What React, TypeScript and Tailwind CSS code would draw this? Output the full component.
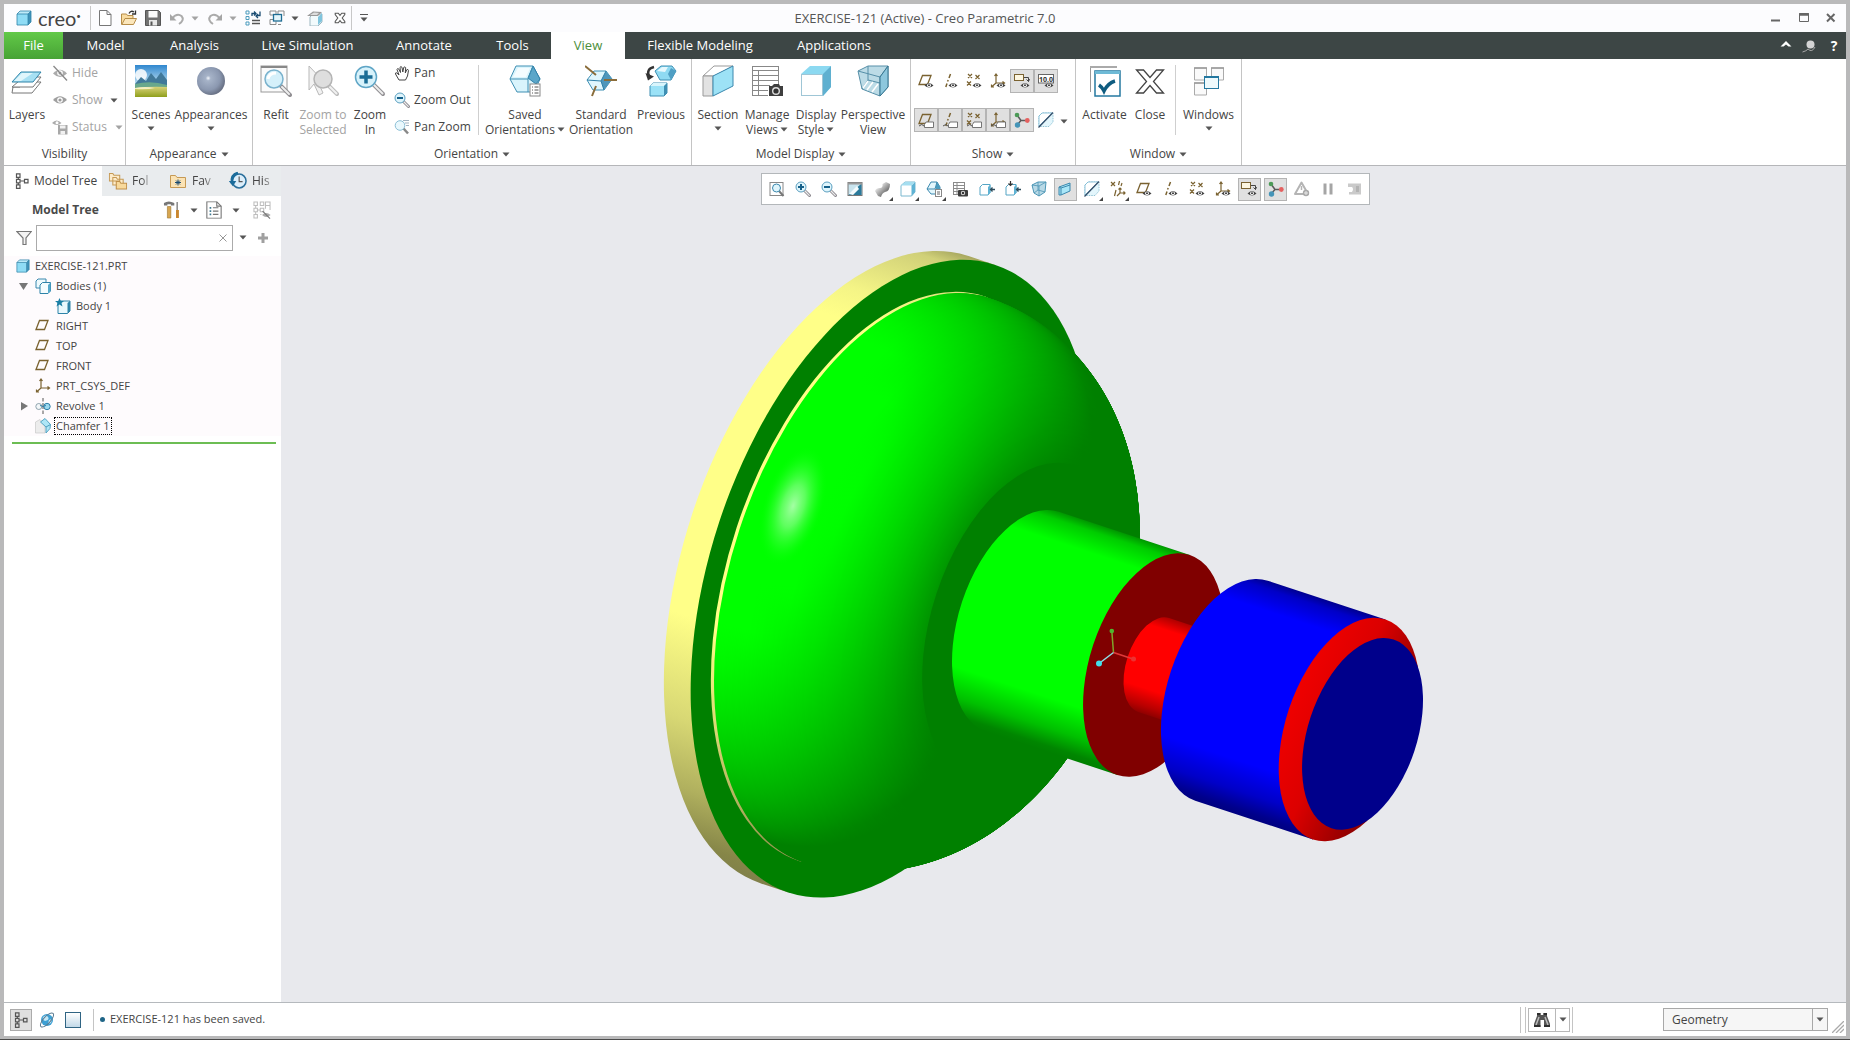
import React from "react";

type IconProps = { children: React.ReactNode; size?: 14 | 16 | 32; className?: string };

const Svg = ({ children, size = 16, className = "" }: IconProps) => (
  <svg
    width={size}
    height={size}
    viewBox={size === 32 ? "0 0 32 32" : "0 0 16 16"}
    fill="none"
    className={"shrink-0 " + className}
    aria-hidden="true"
  >
    {children}
  </svg>
);

const Caret = ({ muted = false }: { muted?: boolean }) => (
  <svg width="8" height="5" viewBox="0 0 8 5" className="inline-block shrink-0" aria-hidden="true">
    <path d="M0.5 0.5h7L4 4.5z" fill={muted ? "#a3a3a3" : "#555"} />
  </svg>
);

const BROWN = "#7a6230";

/* ---------- small icons ---------- */

const Eye = () => (
  <g>
    <path d="M6.5 12.5Q11 7.500 15.500 12.500Q11 16.500 6.500 12.500z" fill="#444" />
    <circle cx="11" cy="12.300" r="1.900" fill="#fff" />
    <circle cx="11" cy="12.300" r="1" fill="#333" />
  </g>
);

const Tag = () => (
  <g>
    <path d="M1 14q3-3 5 0" stroke="#555" />
    <path d="M8 10h7.500v5.500H6.500v-3z" fill="#fff" stroke="#666" strokeWidth="0.900" />
  </g>
);

const planeShape = <path d="M4.500 2.500h8.500l-3.500 9H1z" stroke={BROWN} strokeWidth="1.300" />;
const axisShape = <path d="M8.500 1l-1.500 4M6.200 7l-.6 1.500M5 10.500L3.800 14" stroke={BROWN} strokeWidth="1.500" />;
const pointsShape = (
  <path
    d="M2 1l4 4M6 1L2 5M9.500 2l4 4M13.500 2l-4 4M1 8.500l4 4M5 8.500l-4 4"
    stroke={BROWN}
    strokeWidth="1.200"
  />
);
const csysShape = (
  <path d="M6 10V1.500M4.500 3L6 1l1.500 2M6 10h8M12.500 8.500l2 1.500-2 1.500M6 10l-4.500 4M1.500 11.500V14H4" stroke={BROWN} strokeWidth="1.200" />
);

const Plane = () => <Svg>{planeShape}</Svg>;
const Csys = () => <Svg>{csysShape}</Svg>;
const PlaneEye = () => <Svg>{planeShape}<Eye /></Svg>;
const AxisEye = () => <Svg>{axisShape}<Eye /></Svg>;
const PointsEye = () => <Svg>{pointsShape}<Eye /></Svg>;
const CsysEye = () => <Svg>{csysShape}<Eye /></Svg>;
const PlaneTag = () => <Svg>{planeShape}<Tag /></Svg>;
const AxisTag = () => <Svg>{axisShape}<Tag /></Svg>;
const PointsTag = () => <Svg>{pointsShape}<Tag /></Svg>;
const CsysTag = () => <Svg>{csysShape}<Tag /></Svg>;

const AnnotationEye = () => (
  <Svg>
    <rect x="0.500" y="1.500" width="9" height="6" fill="#fdf6e0" stroke={BROWN} />
    <path d="M10 4.500h4.500v4M12.500 6.500l2 2 1-2.500" stroke="#444" />
    <Eye />
  </Svg>
);

const DimensionEye = () => (
  <Svg>
    <rect x="0.500" y="1.500" width="15" height="8.500" fill="#fff" stroke="#666" />
    <text x="8" y="8.500" textAnchor="middle" fontSize="7" fontWeight="bold" fill="#333">10.0</text>
    <Eye />
  </Svg>
);

const SpinCenter = () => (
  <Svg>
    <path d="M3 3l4 5.500L3 13M7 8.500h6" stroke="#5a5a5a" strokeWidth="1.500" />
    <circle cx="3" cy="3" r="2.300" fill="#4c9a57" />
    <circle cx="3.500" cy="13" r="2.700" fill="#4595b8" />
    <circle cx="13.300" cy="8.500" r="2.400" fill="#e4605f" />
  </Svg>
);

const SectionLine = () => (
  <Svg>
    <path d="M1 4l3-3h11v9l-4 4.500H1z" fill="#e3f6fc" stroke="#92c4d6" strokeDasharray="1.500 1" />
    <path d="M1 4l3-3h10L1 14z" fill="#fff" stroke="#62aecb" strokeWidth="0.700" />
    <path d="M15 0.500L0.500 15.500" stroke="#334b66" strokeWidth="1.200" />
  </Svg>
);

const Cube = ({ size = 16 }: { size?: 14 | 16 }) => (
  <Svg size={size}>
    <path d="M1 4l3-3h11l-3 3z" fill="#bdeaf8" />
    <path d="M12 4l3-3v11l-3 3z" fill="#3f92b8" />
    <rect x="1" y="4" width="11" height="11" fill="#8fdcf5" />
    <path d="M1 4l3-3h11v11l-3 3H1zM1 4h11v11M12 4l3-3" stroke="#2e83a8" strokeWidth="0.800" />
  </Svg>
);

const Wireless = () => (
  <Svg>
    <path d="M1 4.500L5 1h10v10l-3.500 4H1z" fill="#fff" stroke="#7ab8cf" />
    <path d="M11.500 4.500L15 1v10l-3.500 4z" fill="#5fb3d4" />
    <path d="M1 4.500L5 1h10l-3.500 3.500z" fill="#a5def0" />
  </Svg>
);

const Lens = ({ sign }: { sign?: "+" | "-" }) => (
  <Svg>
    <path d="M9.500 9.500l5 5" stroke="#8d8a90" strokeWidth="3" strokeLinecap="round" />
    <path d="M10 10l4.300 4.300" stroke="#eee" strokeWidth="1.200" strokeLinecap="round" />
    <circle cx="6" cy="6" r="5" fill="#dff5fc" stroke="#5b9fc0" />
    {sign && <path d={sign === "+" ? "M6 3v6M3 6h6" : "M3 6h6"} stroke="#15608a" strokeWidth="2" />}
  </Svg>
);

const RefitSmall = () => (
  <Svg>
    <rect x="1" y="1.500" width="13" height="13" fill="#fff" stroke="#888" />
    <path d="M10 10l4.500 5" stroke="#777" strokeWidth="2" />
    <circle cx="7.500" cy="7" r="4" fill="#dff5fc" stroke="#3b88ae" />
  </Svg>
);

const Repaint = () => (
  <Svg>
    <rect x="1" y="1.500" width="14" height="13" fill="#c9e4ee" stroke="#777" />
    <path d="M1.500 14L14.500 2.500V14z" fill="#2b7a9b" />
    <path d="M2 13L10 5l2 3-6 6z" fill="#f4fbfd" />
    <path d="M1 2.500h14" stroke="#999" strokeWidth="2" />
  </Svg>
);

const Shade = () => (
  <Svg>
    <defs>
      <linearGradient id="tube" x1="0" y1="0" x2="1" y2="1">
        <stop offset="0.200" stopColor="#f5f5f5" />
        <stop offset="0.800" stopColor="#5c5c5c" />
      </linearGradient>
    </defs>
    <path d="M1 10q1-3 5-3 3 0 2.500-4L12 1l4 2q0 7-5 8-3 1-4 5l-3-1z" fill="url(#tube)" />
  </Svg>
);

const SavedSmall = () => (
  <Svg>
    <path d="M1 8l4-7h6l3 5v7H5z" fill="#e3f7fd" stroke="#3b88ae" />
    <path d="M11 1l3 5v5h-4V5z" fill="#4a9cbe" />
    <path d="M1 8h8l2-7" stroke="#3b88ae" />
    <rect x="9.500" y="8.500" width="6" height="7" fill="#fff" stroke="#888" />
    <path d="M11 11h3M11 13h3" stroke="#666" />
  </Svg>
);

const ManageSmall = () => (
  <Svg>
    <path d="M1 1.500h12M1 4.500h12M1 7.500h12M1 10.500h6M1 13.500h6M1.500 1v13M5 1v13M12.500 1v8" stroke="#8b8b8b" />
    <rect x="6" y="9" width="10" height="6.500" rx="1" fill="#3d3d3d" />
    <circle cx="11" cy="12" r="2.200" fill="#ddd" />
    <circle cx="11" cy="12" r="1.200" fill="#333" />
  </Svg>
);

const Explode = ({ up = false }: { up?: boolean }) => (
  <Svg>
    <path d="M1 6l2.500-2.500H11v8L9 14H1z" fill="#fff" stroke="#55a5c5" />
    <path d="M9 6l2.500-2.500v8L9 14z" fill="#5fb3d4" />
    {up && <path d="M5.500 0v4M3.500 2.500l2 2 2-2" stroke="#333" strokeWidth="1.200" />}
    <path d="M16 8.500h-4.500M13.500 6.500l-2 2 2 2" stroke="#2d4c5c" strokeWidth="1.300" />
  </Svg>
);

const PerspectiveSmall = () => (
  <Svg>
    <path d="M1 4l6-3h8l-1 10-6 4-5-3z" fill="#b9d9e6" stroke="#4b95b5" />
    <path d="M1 4l7 1v10M8 5l7-4M7 1v8l7 2M7 9l-4 3" stroke="#4b95b5" strokeWidth="0.800" />
  </Svg>
);

const ViewPlane = () => (
  <Svg>
    <path d="M2 6l11-4v8L4 14H2z" fill="#a9e6f7" stroke="#3b88ae" />
    <path d="M2 6l2 1v7M4 7l9-3" stroke="#3b88ae" />
  </Svg>
);

const DatumFilters = () => (
  <Svg>
    <path d="M1 1l4 4M5 1L1 5M9.500 0l-1 4M12 2l-1 3M6 9l-1.500 6M10 7v5h5M10 12l-3 3M8.500 8.500L10 7l1.500 1.500M13.500 10.500L15 12l-1.500 1.500" stroke={BROWN} strokeWidth="1.200" />
  </Svg>
);

const WarnTriangle = () => (
  <Svg>
    <path d="M7.500 1.500L14 13H1z" stroke="#b4b4b4" strokeWidth="2" strokeLinejoin="round" />
    <path d="M7.500 5v4" stroke="#b4b4b4" strokeWidth="1.500" />
    <circle cx="12" cy="12" r="3.200" fill="#a9a9a9" />
    <path d="M12 10v4M10 12h4" stroke="#e8e8e8" />
  </Svg>
);

const Pause = () => <Svg><path d="M3.500 2.500h3v11h-3zM9.500 2.500h3v11h-3z" fill="#a5a5a5" /></Svg>;

const Resume = () => (
  <Svg>
    <path d="M2 2.500h13v11H3v-2.500h3q2-3 0-5H2z" fill="#cacaca" />
    <path d="M10 5h3v6h-3z" fill="#b3b3b3" />
  </Svg>
);

const TreeIcon = ({ stroke = "#555" }: { stroke?: string }) => (
  <Svg>
    <path d="M2.500 0.800H6v3.500H2.500zM2.500 6.300H6v3.500H2.500zM2.500 11.800H6v3.500H2.500zM10.500 6.300H14v3.500h-3.500zM4.300 4.300v2M4.300 9.800v2M6 8h4.500" stroke={stroke} strokeWidth="1.200" />
  </Svg>
);

const Folders = () => (
  <Svg className="scale-115">
    <path d="M0.500 8V1.500h3l1 1.500h5v5zM3.500 11.500V5h3l1 1.500h5v5z" fill="#fdeccb" stroke="#c69a55" strokeWidth="0.900" />
    <path d="M6.500 15V8.500h3l1 1.500h5v5z" fill="#f8d99b" stroke="#c0904a" strokeWidth="0.900" />
  </Svg>
);

const Favorites = () => (
  <Svg>
    <path d="M0.500 14.500v-12h5l1.500 2h8.500v10z" fill="#fbe3b4" stroke="#c69a55" />
    <path d="M8 6.500v6M5 9.500h6M6 7.500l4 4M10 7.500l-4 4" stroke="#1b4c72" />
  </Svg>
);

const History = () => (
  <Svg className="scale-115">
    <circle cx="9" cy="8" r="6" fill="#dceefa" stroke="#2a6f9b" strokeWidth="1.300" />
    <path d="M9 4v4.500h3" stroke="#555" />
    <path d="M8 1Q1.500 3 3 10" stroke="#1b6c9b" strokeWidth="2.500" />
    <path d="M0 8h6.500l-3 4.500z" fill="#1b6c9b" />
  </Svg>
);

const Tools = () => (
  <Svg className="scale-115">
    <path d="M1 2q4-3 9 0v2H7v-1H4v1H1z" fill="#777" />
    <path d="M4 5h3v10H4z" fill="#d7a650" stroke="#9b7027" strokeWidth="0.500" />
    <path d="M12.500 1v7" stroke="#888" strokeWidth="1.300" />
    <path d="M11.500 8h2.500v7h-2.500z" fill="#c9862e" />
  </Svg>
);

const SettingsPage = () => (
  <Svg className="scale-110">
    <path d="M1.500 0.500h9l4 4v11h-13z" fill="#fff" stroke="#777" />
    <path d="M10.500 0.500v4h4" stroke="#777" />
    <path d="M4 6h1.500M4 9h1.500M4 12h1.500" stroke="#3d7891" strokeWidth="1.500" />
    <path d="M7 6h5M7 9h5M7 12h5" stroke="#777" />
  </Svg>
);

const TreeHide = () => (
  <Svg className="scale-115">
    <path d="M1 1h3v3H1zM1 6.500h3v3H1zM1 12h3v3H1zM6.500 1h3v3h-3zM6.500 6.500h3v3h-3zM6.500 12h1M11 1h4v3h-4zM15 4v4M11 4v3M4 8h2.500M2.500 4v2.500M2.500 9.500V12" stroke="#bdbdbd" strokeWidth="0.900" />
    <path d="M8 12.300q3.500-3.500 7.500 0-4 3.500-7.500 0z" fill="#aaa" />
    <path d="M8.500 9l6.500 6.500" stroke="#777" />
  </Svg>
);

const Funnel = () => (
  <Svg>
    <path d="M0.800 1.500h14.400L10 8v6.500H7V8z" fill="#f3f3f3" stroke="#777" strokeWidth="1.200" />
  </Svg>
);

const Bodies = () => (
  <Svg>
    <path d="M1 3l2-2h8v9H1z" fill="#eefafd" stroke="#3b88ae" />
    <path d="M5 7l2.500-2.500H15.500V13L13 15.500H5z" fill="#f4fcfe" stroke="#2e83a8" />
    <path d="M13 7l2.500-2.500V13L13 15.500z" fill="#55a9cb" />
  </Svg>
);

const Body = () => (
  <Svg>
    <path d="M3 5l2-2h10v10l-2.500 2.500H3z" fill="#e9f8fd" stroke="#2e83a8" />
    <path d="M12.500 5L15 3v10l-2.500 2.500z" fill="#2e83a8" />
    <path d="M4.500 0l1.300 3h3.200L6.500 5l1 3.500-3-2-3 2 1-3.500L0 3h3.200z" fill="#1b7fa5" />
  </Svg>
);

const Revolve = () => (
  <Svg>
    <circle cx="3.800" cy="8.500" r="3" fill="#f3f7f9" stroke="#8fa3ad" />
    <circle cx="12" cy="8.500" r="3.200" fill="#9bd9ef" stroke="#2e7fa8" />
    <path d="M8 0v3.500M8 5v6M8 12.500V16" stroke="#555" />
    <path d="M5 7.500q3 2 6 0" stroke="#2e7fa8" />
  </Svg>
);

const Chamfer = () => (
  <Svg>
    <path d="M0.500 4L5 1.500l5 5V15H0.500z" fill="#ececec" stroke="#c9c9c9" strokeWidth="0.700" />
    <path d="M5.500 4L10 0.500l5.500 6-.5 4-4 4.500v-6z" fill="#aee6f6" stroke="#4a9dbd" strokeWidth="0.900" />
    <path d="M11 9l4.500-2.500" stroke="#4a9dbd" />
  </Svg>
);

const HideEye = () => (
  <Svg>
    <path d="M1 8.500q7-7.500 14 0-7 7-14 0z" fill="#ababab" />
    <circle cx="8" cy="8" r="2.800" fill="#fff" />
    <circle cx="8" cy="8" r="1.500" fill="#9b9b9b" />
    <path d="M1.500 1L15 15.500" stroke="#888" strokeWidth="1.300" />
  </Svg>
);

const ShowEye = () => (
  <Svg>
    <path d="M1 8q7-7.500 14 0-7 7-14 0z" fill="#9f9f9f" />
    <circle cx="8" cy="8" r="2.800" fill="#fff" />
    <circle cx="8" cy="8" r="1.600" fill="#9b9b9b" />
  </Svg>
);

const StatusIcon = () => (
  <Svg>
    <path d="M0 4q4.500-5 9.500 0-4.500 4-9.500 0z" fill="#ababab" />
    <circle cx="5" cy="3.800" r="1.500" fill="#fff" />
    <path d="M6 6h9.500v9.500H6z" fill="#a8a8a8" />
    <path d="M8 6.500h5.500v3H8zM8.500 12h4.500v3.500H8.500z" fill="#f1f1f1" />
  </Svg>
);

const Hand = () => (
  <Svg>
    <path d="M5 15L1.500 9q-.3-1.500 1.200-1.200L5 10 3 4.500q.3-1.500 1.700-.6L6.500 7.500 6 2.300q.8-1.400 2 0l.8 4.700 1-4.700q1.200-1 1.900.3L11.300 8l1.500-3.300q1.500-.7 1.700.7L13.500 11 11.500 15z" fill="#fff" stroke="#444" />
  </Svg>
);

const PanZoom = () => (
  <Svg>
    <path d="M9.500 9.500l4.500 5" stroke="#888" strokeWidth="2.500" />
    <circle cx="6" cy="6.500" r="4.800" fill="#e9f8fd" stroke="#8bbfd6" />
    <path d="M9 1.500h6M11 4h4M12 6.500h3" stroke="#9ab" strokeWidth="0.900" />
  </Svg>
);

/* ---------- title bar icons ---------- */

const NewFile = () => <Svg><path d="M2.500 0.500h7.500l4 4v11H2.500zM10 0.500v4h4" fill="#fff" stroke="#777" /></Svg>;

const OpenFile = () => (
  <Svg>
    <path d="M0.500 14.500V4h5l1 1.500H12v3" fill="#f8dba0" stroke="#b68d49" />
    <path d="M0.800 14.500L4 8.500h11.500l-3 6z" fill="#fbe6bb" stroke="#b68d49" />
    <path d="M8 3.500q2-3.500 5-1.500M11 4h3.500V0.500" stroke="#333" strokeWidth="1.300" />
  </Svg>
);

const Save = () => (
  <Svg>
    <path d="M0.500 0.500h13l2 2v13h-15z" fill="#727272" stroke="#555" />
    <path d="M3.500 1h9v6.500h-9z" fill="#fafafa" />
    <path d="M4 10h8v5.500H4z" fill="#e7e7e7" />
    <path d="M5.500 11.500h2v4h-2z" fill="#555" />
  </Svg>
);

const Undo = ({ flip = false }: { flip?: boolean }) => (
  <Svg>
    <g transform={flip ? "matrix(-1 0 0 1 16 0)" : undefined}>
      <path d="M3 8.500q5-6 9.500-2.500 3.500 4-2.500 8" stroke="#ababab" strokeWidth="2" />
      <path d="M1 4v6.500h6.500z" fill="#a6a6a6" />
    </g>
  </Svg>
);

const Regenerate = () => (
  <Svg>
    <path d="M1 1h3v3H1zM1 6.500h3v3H1zM1 12h3v3H1z" stroke="#4b9bbd" />
    <path d="M7 10.500h8M7 13.500h8" stroke="#555" strokeWidth="1.300" />
    <path d="M7 6V3.500h4M9 1.500l2 2-2 2M15 1.500V5.500h-3M13 4l-2 2 2 2" stroke="#1b4c72" strokeWidth="1.300" />
  </Svg>
);

const WindowsSmall = () => (
  <Svg>
    <path d="M5 5H1V1h6v3M9 4V1h6v5M4 9.500H1v5h6v-3M9 14.500h3" stroke="#8a8a8a" />
    <rect x="4.500" y="4.500" width="8" height="6.500" fill="#e4f5fb" stroke="#1f6d94" strokeWidth="1.300" />
  </Svg>
);

const SectionSmall = () => (
  <Svg>
    <path d="M3 7l3-3h9v8l-4 4H3z" fill="#f2fafc" stroke="#9fb8c2" />
    <path d="M11 7l4-4v8l-4 4z" fill="#7fc4dd" />
    <path d="M0 6l6-4.500L15 2l-4 4z" fill="#999" />
    <path d="M3 5l4-2.500 5 .5-2 2z" fill="#ddd" />
  </Svg>
);

const CloseX = () => (
  <Svg size={14}>
    <path d="M2.500 2.500h3.500L8 5l2-2.500h3.500v1.500L10.500 8l3 4v1.500H10L8 11l-2 2.500H2.500V12l3-4-3-4z" fill="#fff" stroke="#555" strokeWidth="1.200" />
  </Svg>
);

/* ---------- large ribbon icons ---------- */

const LayersIcon = () => (
  <Svg size={32}>
    <path d="M9 22H2l-1 6h20l9-11h-4" fill="#fff" stroke="#777" />
    <path d="M8 16L1 22h21l8-10h-4" fill="#fff" stroke="#777" />
    <path d="M10 7h20L22 17H1z" fill="#a7e0f3" stroke="#2e83a8" />
    <path d="M11 8h11L10 16H3z" fill="#e0f6fc" />
  </Svg>
);

const ScenesIcon = () => (
  <Svg size={32}>
    <defs>
      <linearGradient id="sky" x1="0" y1="0" x2="0" y2="1">
        <stop offset="0" stopColor="#2f87cf" />
        <stop offset="0.600" stopColor="#bfe0f0" />
      </linearGradient>
      <linearGradient id="field" x1="0" y1="0" x2="0" y2="1">
        <stop offset="0" stopColor="#d9d37a" />
        <stop offset="1" stopColor="#8f9f1c" />
      </linearGradient>
    </defs>
    <rect width="32" height="32" fill="url(#sky)" />
    <circle cx="6" cy="10" r="6" fill="#fff" opacity="0.850" />
    <path d="M0 19l6-7 5 4 5-8 5 6 5-7 6 8v7H0z" fill="#41799a" />
    <path d="M0 19q16-4 32 1v3H0z" fill="#69a88c" />
    <path d="M0 23q16-2 32-1v10H0z" fill="url(#field)" />
    <path d="M0 23q10-2 20 0-8 2-20 1z" fill="#f4efc0" />
  </Svg>
);

const AppearanceIcon = () => (
  <Svg size={32}>
    <defs>
      <radialGradient id="ball" cx="0.400" cy="0.400" r="0.600">
        <stop offset="0" stopColor="#f3f6fb" />
        <stop offset="0.150" stopColor="#a6b3c8" />
        <stop offset="0.700" stopColor="#8b98b0" />
        <stop offset="1" stopColor="#6b7488" />
      </radialGradient>
    </defs>
    <circle cx="16" cy="16" r="14" fill="url(#ball)" />
  </Svg>
);

const RefitIcon = () => (
  <Svg size={32}>
    <rect x="1" y="1" width="26" height="26" fill="#fbfbfb" stroke="#999" />
    <path d="M1 2h26" stroke="#888" strokeWidth="2" />
    <path d="M21 21l9 9" stroke="#918f93" strokeWidth="4" strokeLinecap="round" />
    <path d="M22 22l7 7" stroke="#eee" strokeWidth="2" strokeLinecap="round" />
    <circle cx="14" cy="14" r="9" fill="#d5f0fa" stroke="#7ab2cd" strokeWidth="1.500" />
    <path d="M8 14q1-6 8-6" stroke="#fff" strokeWidth="3" />
  </Svg>
);

const ZoomSelectedIcon = () => (
  <Svg size={32}>
    <path d="M2 1v24l5-6 5 11 4-2-4-9h7z" fill="#f2f2f2" stroke="#b9b9b9" />
    <path d="M22 21l8 8" stroke="#bcbcbc" strokeWidth="4" strokeLinecap="round" />
    <path d="M23 22l6.500 6.500" stroke="#f1f1f1" strokeWidth="2" strokeLinecap="round" />
    <circle cx="16" cy="14" r="9" fill="#dedede" stroke="#b4b4b4" strokeWidth="1.500" />
  </Svg>
);

const ZoomInIcon = () => (
  <Svg size={32}>
    <path d="M19 19l10 10" stroke="#918f93" strokeWidth="4" strokeLinecap="round" />
    <path d="M20 20l8.500 8.500" stroke="#eee" strokeWidth="2" strokeLinecap="round" />
    <circle cx="12" cy="12" r="10.500" fill="#d7f2fb" stroke="#5ea5c6" strokeWidth="1.500" />
    <path d="M12 5.500v13M5.500 12h13" stroke="#1a6d96" strokeWidth="3.500" />
  </Svg>
);

const SavedIcon = () => (
  <Svg size={32}>
    <path d="M1 14L7 1h17l7 13-6 13H8z" fill="#d9f4fc" stroke="#3f8fb3" />
    <path d="M24 1l7 13-4 5-8-6z" fill="#5ba6c9" stroke="#2e7fa8" />
    <path d="M1 14h18L24 1M19 14v13" stroke="#3f8fb3" />
    <path d="M9 3h12l-4 9H4z" fill="#f4fcff" />
    <rect x="21" y="19" width="10" height="12" fill="#fff" stroke="#888" />
    <path d="M23 22h1M25.500 22h4M23 25h1M25.500 25h4M23 28h1M25.500 28h4" stroke="#555" />
  </Svg>
);

const StandardIcon = () => (
  <Svg size={32}>
    <path d="M2 15l7-9h12l6 8-8 11H8z" fill="#dff6fd" stroke="#3f8fb3" />
    <path d="M21 6l6 8-8 11-3-9z" fill="#4f96bb" />
    <path d="M2 15l14 1 5-10M16 16l3 9" stroke="#2e7fa8" />
    <path d="M0 1l11 9M19 15h13M11 21L7 31" stroke="#8a6d3b" strokeWidth="2" />
  </Svg>
);

const PreviousIcon = () => (
  <Svg size={32}>
    <path d="M10 6l6-5h11l4 5-5 9H15z" fill="#8fdaf2" stroke="#3f8fb3" />
    <path d="M12 6l5-4h6l-3 5z" fill="#e5f8fd" />
    <path d="M26 3l5 3-5 9-3-6z" fill="#4f9fc4" />
    <path d="M5 21l3-3h14v10l-3 3H5z" fill="#9be2f7" stroke="#3f8fb3" />
    <path d="M5 21l3-3h14l-3 3z" fill="#d9f5fc" />
    <path d="M19 21l3-3v10l-3 3z" fill="#3f8fb3" />
    <path d="M9 2Q1 4 4 11" stroke="#333" strokeWidth="2.500" />
    <path d="M0.500 8L3 15.500l6-4z" fill="#333" />
  </Svg>
);

const SectionIcon = () => (
  <Svg size={32}>
    <path d="M1 11L12 1h19L12 11z" fill="#fff" stroke="#999" />
    <path d="M1 11h10v20H1z" fill="#e2e2e2" stroke="#999" />
    <path d="M11 11L31 1v20L11 31z" fill="#9de2f6" stroke="#3b88ae" />
  </Svg>
);

const ManageIcon = () => (
  <Svg size={32}>
    <path d="M1 1h27v29H1z" fill="#fff" />
    <path d="M1 1.500h27M1 5.500h27M1 10.500h27M1 15.500h27M1 20.500h18M1 25.500h16M1 30.500h16M1.500 1v30M7.500 6v25M27.500 1v20" stroke="#888" />
    <path d="M18 21h3l2-2h5l1 2h3v10H18z" fill="#3e3e3e" />
    <circle cx="25" cy="26" r="4" fill="#ddd" />
    <circle cx="25" cy="26" r="2.600" fill="#333" />
  </Svg>
);

const DisplayIcon = () => (
  <Svg size={32}>
    <path d="M1 9l9-8h21v21l-8 9H1z" fill="#8cd9f1" />
    <path d="M23 9l8-8v21l-8 9z" fill="#5fb0d0" />
    <rect x="1.500" y="9.500" width="21" height="21" fill="#fff" stroke="#9fc6d6" />
  </Svg>
);

const PerspectiveIcon = () => (
  <Svg size={32}>
    <path d="M1 6L11 1h20v21l-8 9-18-7z" fill="#bcdbe6" stroke="#568fa8" />
    <path d="M1 6l22 6v19M23 12l8-11M11 1v14l20 5M11 15L5 24" stroke="#568fa8" />
    <path d="M23 12l8-11v21l-8 9z" fill="#8dc7dd" stroke="#36758f" />
    <path d="M11 16L6 23M16 17l-6 8M21 19l-6 8" stroke="#fff" strokeWidth="1.500" />
  </Svg>
);

const ActivateIcon = () => (
  <Svg size={32}>
    <path d="M1.500 27V1.500h26" stroke="#999" />
    <path d="M1 2h27" stroke="#aaa" strokeWidth="2" />
    <rect x="6" y="6" width="25" height="25" fill="#fff" stroke="#2478a0" strokeWidth="1.500" />
    <path d="M6 7.500h25" stroke="#6ebad6" strokeWidth="3" />
    <path d="M10 20q3 2 5 6 4-8 11-10" stroke="#0f5c80" strokeWidth="3.500" />
  </Svg>
);

const CloseIcon = () => (
  <Svg size={32}>
    <path d="M2.500 5h7L16 12.500 22.500 5h7L19.500 16.500 29.500 28h-7L16 20.500 9.500 28h-7l10-11.500z" fill="#fff" stroke="#444" strokeWidth="1.300" />
  </Svg>
);

const WindowsIcon = () => (
  <Svg size={32}>
    <path d="M1.500 3h12v12h-12zM18.500 3h12v12h-12zM1.500 18h12v12h-12z" fill="#fafafa" stroke="#aaa" />
    <path d="M1 3h13M18 3h13M1 18h13" stroke="#999" strokeWidth="1.500" />
    <rect x="11.500" y="11.500" width="14" height="12" fill="#eefafd" stroke="#2478a0" />
    <path d="M11 12h15" stroke="#2478a0" strokeWidth="2" />
  </Svg>
);

/* ---------- ribbon building blocks ---------- */

type BigButtonProps = { icon: React.ReactNode; lines: string[]; width: string; caret?: "below" | "inline"; muted?: boolean };

const BigButton = ({ icon, lines, width, caret, muted }: BigButtonProps) => (
  <button className={`flex shrink-0 flex-col items-center ${width} ${muted ? "text-[#a3a3a3]" : ""}`}>
    {icon}
    <span className="mt-2.5 flex flex-col items-center text-xs leading-[15px] whitespace-nowrap">
      {lines.map((line, i) => (
        <span key={line} className="flex items-center gap-0.5">
          {line}
          {caret === "inline" && i === lines.length - 1 && <Caret />}
        </span>
      ))}
    </span>
    {caret === "below" && <span className="flex h-3 items-center"><Caret /></span>}
  </button>
);

const SmallButton = ({ icon, label, caret, muted }: { icon: React.ReactNode; label: string; caret?: boolean; muted?: boolean }) => (
  <button className={`flex h-4 items-center gap-1 text-xs whitespace-nowrap ${muted ? "text-[#a3a3a3]" : ""}`}>
    {icon}
    <span>{label}</span>
    {caret && <span className="ml-1 flex"><Caret muted={label === "Status"} /></span>}
  </button>
);

const Group = ({ label, width, caret = true, children }: { label: string; width: string; caret?: boolean; children: React.ReactNode }) => (
  <section className={`flex shrink-0 flex-col border-r border-[#c4c4c4] ${width}`} aria-label={label}>
    <div className="flex h-[85px] pt-1.5">{children}</div>
    <div className="flex h-5 items-center justify-center gap-1 text-xs">
      {label}
      {caret && <Caret />}
    </div>
  </section>
);

const IconButton = ({ label, pressed, children }: { label: string; pressed?: boolean; children: React.ReactNode }) => (
  <button
    aria-label={label}
    aria-pressed={pressed}
    className={`flex size-6 shrink-0 items-center justify-center ${pressed ? "border border-[#b4b4b4] bg-[#e0e0e0]" : ""}`}
  >
    {children}
  </button>
);

const tabs = [
  { name: "Model", width: "w-[85px]" },
  { name: "Analysis", width: "w-[93px]" },
  { name: "Live Simulation", width: "w-[133px]" },
  { name: "Annotate", width: "w-[100px]" },
  { name: "Tools", width: "w-[77px]" },
  { name: "View", width: "w-[74px]" },
  { name: "Flexible Modeling", width: "w-[150px]" },
  { name: "Applications", width: "w-[118px]" },
];

const TitleBar = () => (
  <header className="relative flex h-7 shrink-0 items-center bg-[#fcfcfe] pr-1.5 pl-3">
    <Cube />
    <span className="ml-1.5 flex w-12 items-start font-[Lato] text-xl leading-5 text-[#444]">
      creo<span className="mt-1 text-[8px] leading-none">•</span>
    </span>
    <span className="ml-1 h-6 w-px bg-[#c8c8c8]" />
    <div className="ml-1.5 flex items-center gap-2">
      <button aria-label="New"><NewFile /></button>
      <button aria-label="Open"><OpenFile /></button>
      <button aria-label="Save"><Save /></button>
      <button aria-label="Undo" className="flex items-center gap-1.5"><Undo /><Caret muted /></button>
      <button aria-label="Redo" className="flex items-center gap-1.5"><Undo flip /><Caret muted /></button>
      <button aria-label="Regenerate"><Regenerate /></button>
      <button aria-label="Switch windows" className="flex items-center gap-1.5"><WindowsSmall /><Caret /></button>
      <button aria-label="Section view"><SectionSmall /></button>
      <button aria-label="Close window" className="ml-0.5"><CloseX /></button>
    </div>
    <span className="ml-1 h-6 w-px bg-[#c8c8c8]" />
    <button aria-label="Customize toolbar" className="ml-2 flex flex-col items-center gap-0.5">
      <span className="h-px w-2 bg-[#555]" />
      <Caret />
    </button>
    <h1 className="pointer-events-none absolute inset-x-0 pt-px text-center text-[13px] text-[#555]">
      EXERCISE-121 (Active) - Creo Parametric 7.0
    </h1>
    <div className="ml-auto flex items-center gap-3">
      <button aria-label="Minimize"><Svg><path d="M3 10.500h9" stroke="#666" strokeWidth="2" /></Svg></button>
      <button aria-label="Maximize"><Svg><path d="M3.500 3.500h9v8h-9z" stroke="#666" /><path d="M3 4.500h10" stroke="#666" strokeWidth="2.500" /></Svg></button>
      <button aria-label="Close"><Svg><path d="M3 4l7.500 7.500M10.500 4L3 11.500" stroke="#666" strokeWidth="2" /></Svg></button>
    </div>
  </header>
);

const TabBar = () => (
  <nav className="flex h-[27px] shrink-0 items-stretch bg-[#3d4645] text-[13px] text-white">
    <button className="w-[59px] bg-linear-to-b from-[#62c948] to-[#47a335] pt-px">File</button>
    {tabs.map((tab) => (
      <button key={tab.name} className={`pt-px ${tab.width} ${tab.name === "View" ? "bg-white text-[#4c8f3b]" : ""}`}>
        {tab.name}
      </button>
    ))}
    <div className="ml-auto flex items-center gap-2 pr-1">
      <button aria-label="Collapse ribbon"><Svg><path d="M2.500 8.500L8 3l5.500 5.500h-3L8 6.500l-2.500 2z" fill="#fff" /></Svg></button>
      <button aria-label="Search"><Svg><path d="M0.500 14q4-1 5.500-3 4 4 7-2" stroke="#aaa" /><circle cx="8.500" cy="6.500" r="4" fill="#d4d4d4" /></Svg></button>
      <button aria-label="Help" className="w-4 text-[14px] font-bold">?</button>
    </div>
  </nav>
);

const Ribbon = () => (
  <div className="flex h-[107px] shrink-0 border-b border-[#b5b6b9] bg-white">
    <Group label="Visibility" width="w-[122px]" caret={false}>
      <BigButton icon={<LayersIcon />} lines={["Layers"]} width="w-[46px]" />
      <div className="flex flex-col gap-[11px] pl-0.5">
        <SmallButton icon={<HideEye />} label="Hide" muted />
        <SmallButton icon={<ShowEye />} label="Show" caret muted />
        <SmallButton icon={<StatusIcon />} label="Status" caret muted />
      </div>
    </Group>
    <Group label="Appearance" width="w-[127px]">
      <BigButton icon={<ScenesIcon />} lines={["Scenes"]} width="w-[50px]" caret="below" />
      <BigButton icon={<AppearanceIcon />} lines={["Appearances"]} width="w-[70px]" caret="below" />
    </Group>
    <Group label="Orientation" width="w-[439px]">
      <BigButton icon={<RefitIcon />} lines={["Refit"]} width="w-[46px]" />
      <BigButton icon={<ZoomSelectedIcon />} lines={["Zoom to", "Selected"]} width="w-[48px]" muted />
      <BigButton icon={<ZoomInIcon />} lines={["Zoom", "In"]} width="w-[46px]" />
      <div className="flex w-[85px] flex-col gap-[11px] pl-px">
        <SmallButton icon={<Hand />} label="Pan" />
        <SmallButton icon={<Lens sign="-" />} label="Zoom Out" />
        <SmallButton icon={<PanZoom />} label="Pan Zoom" />
      </div>
      <span className="h-[70px] w-px bg-[#cfcfcf]" />
      <BigButton icon={<SavedIcon />} lines={["Saved", "Orientations"]} width="w-[92px]" caret="inline" />
      <BigButton icon={<StandardIcon />} lines={["Standard", "Orientation"]} width="w-[60px]" />
      <BigButton icon={<PreviousIcon />} lines={["Previous"]} width="w-[60px]" />
    </Group>
    <Group label="Model Display" width="w-[219px]">
      <BigButton icon={<SectionIcon />} lines={["Section"]} width="w-[52px]" caret="below" />
      <BigButton icon={<ManageIcon />} lines={["Manage", "Views"]} width="w-[46px]" caret="inline" />
      <BigButton icon={<DisplayIcon />} lines={["Display", "Style"]} width="w-[52px]" caret="inline" />
      <BigButton icon={<PerspectiveIcon />} lines={["Perspective", "View"]} width="w-[62px]" />
    </Group>
    <Group label="Show" width="w-[165px]">
      <div className="flex flex-col gap-[15px] pt-1 pl-[3px]">
        <div className="flex">
          <IconButton label="Plane display"><PlaneEye /></IconButton>
          <IconButton label="Axis display"><AxisEye /></IconButton>
          <IconButton label="Point display"><PointsEye /></IconButton>
          <IconButton label="Csys display"><CsysEye /></IconButton>
          <IconButton label="Annotation display" pressed><AnnotationEye /></IconButton>
          <IconButton label="Dimension display" pressed><DimensionEye /></IconButton>
        </div>
        <div className="flex items-center">
          <IconButton label="Plane tags" pressed><PlaneTag /></IconButton>
          <IconButton label="Axis tags" pressed><AxisTag /></IconButton>
          <IconButton label="Point tags" pressed><PointsTag /></IconButton>
          <IconButton label="Csys tags" pressed><CsysTag /></IconButton>
          <IconButton label="Spin center" pressed><SpinCenter /></IconButton>
          <IconButton label="Section display"><SectionLine /></IconButton>
          <button aria-label="More section options" className="px-0.5"><Caret /></button>
        </div>
      </div>
    </Group>
    <Group label="Window" width="w-[166px]">
      <BigButton icon={<ActivateIcon />} lines={["Activate"]} width="w-[57px]" />
      <BigButton icon={<CloseIcon />} lines={["Close"]} width="w-[34px]" />
      <span className="ml-2 h-[70px] w-px bg-[#cfcfcf]" />
      <BigButton icon={<WindowsIcon />} lines={["Windows"]} width="w-[65px]" caret="below" />
    </Group>
  </div>
);

/* ---------- model tree ---------- */

const treeItems = [
  { name: "EXERCISE-121.PRT", icon: <Cube size={14} />, indent: "pl-3" },
  { name: "Bodies (1)", icon: <Bodies />, indent: "pl-2.5", toggle: "open" },
  { name: "Body 1", icon: <Body />, indent: "pl-[51px]" },
  { name: "RIGHT", icon: <Plane />, indent: "pl-[31px]" },
  { name: "TOP", icon: <Plane />, indent: "pl-[31px]" },
  { name: "FRONT", icon: <Plane />, indent: "pl-[31px]" },
  { name: "PRT_CSYS_DEF", icon: <Csys />, indent: "pl-[31px]" },
  { name: "Revolve 1", icon: <Revolve />, indent: "pl-2.5", toggle: "closed" },
  { name: "Chamfer 1", icon: <Chamfer />, indent: "pl-[31px]", focused: true },
];

const sideTabs = [
  { name: "Fol", icon: <Folders />, width: "w-[60px]" },
  { name: "Fav", icon: <Favorites />, width: "w-[60px]" },
  { name: "His", icon: <History />, width: "w-[56px]" },
];

const ModelTree = () => (
  <aside className="flex w-[277px] shrink-0 flex-col bg-white">
    <div className="flex h-[30px] shrink-0 bg-[#e9ecee] text-xs">
      <button className="flex w-[98px] shrink-0 items-center gap-1 bg-white pl-2.5 whitespace-nowrap">
        <TreeIcon />
        Model Tree
      </button>
      {sideTabs.map((tab) => (
        <button key={tab.name} className={`flex items-center gap-1.5 pl-2 ${tab.width}`}>
          {tab.icon}
          <span className="[mask-image:linear-gradient(to_right,black_60%,rgba(0,0,0,0.4))]">{tab.name}</span>
        </button>
      ))}
    </div>
    <div className="flex h-7 items-center pl-7">
      <h2 className="w-[132px] text-xs font-bold text-[#4a4a4a]">Model Tree</h2>
      <div className="flex items-center gap-2">
        <button aria-label="Tree tools" className="flex items-center gap-2.5"><Tools /><Caret /></button>
        <button aria-label="Tree settings" className="flex items-center gap-2.5"><SettingsPage /><Caret /></button>
        <button aria-label="Show tree columns" className="ml-1.5"><TreeHide /></button>
      </div>
    </div>
    <div className="flex h-[27px] items-center gap-1 pl-3">
      <Funnel />
      <div className="flex h-[26px] w-[197px] items-center border border-[#ababab] bg-white pr-0.5">
        <input aria-label="Filter tree" type="text" className="min-w-0 flex-1 px-1 text-xs outline-none" />
        <button aria-label="Clear filter"><Svg size={14}><path d="M4 4l8 8M12 4l-8 8" stroke="#888" /></Svg></button>
      </div>
      <button aria-label="Filter options" className="ml-0.5 flex w-3"><Caret /></button>
      <button aria-label="Add filter"><Svg><path d="M8 3v10M3 8h10" stroke="#a0a0a0" strokeWidth="3" /></Svg></button>
    </div>
    <ul className="mt-[5px] bg-[#fefbfd] text-[11px]">
      {treeItems.map((item) => (
        <li key={item.name} className={`flex h-5 items-center ${item.indent}`}>
          {item.toggle && (
            <button aria-label={`Toggle ${item.name}`} className="mr-[5px]">
              <Svg>
                <path d={item.toggle === "open" ? "M5 5h9l-4.500 7z" : "M7 4l7 4-7 4.500z"} fill="#777" />
              </Svg>
            </button>
          )}
          {item.icon}
          <span className={`ml-[3px] border border-dotted px-px leading-4 ${item.focused ? "border-black" : "border-transparent"}`}>
            {item.name}
          </span>
        </li>
      ))}
    </ul>
    <div className="mt-1.5 mr-[5px] ml-2 h-0.5 bg-[#6cbd53]" />
  </aside>
);

/* ---------- 3D view ---------- */

// circles perpendicular to the shaft project to ellipses with this width/height ratio
const RATIO = 0.55;
const AXIAL = 0.835;

const Disc = ({ at, r, fill }: { at: number; r: number; fill: string }) => (
  <ellipse cx={at} cy={0} rx={r * RATIO} ry={r} fill={fill} />
);

const Barrel = ({ from, to, r, fill }: { from: number; to: number; r: number; fill: string }) => (
  <path d={`M${to} ${-r}H${from}A${r * RATIO} ${r} 0 0 0 ${from} ${r}H${to}z`} fill={fill} />
);

const Shading = ({ id, r, stops }: { id: string; r: number; stops: [number, string][] }) => (
  <linearGradient id={id} gradientUnits="userSpaceOnUse" x1="0" y1={-r} x2="0" y2={r}>
    {stops.map(([s, color]) => (
      <stop key={s} offset={(s + 1) / 2} stopColor={color} />
    ))}
  </linearGradient>
);

const BOWL_START = -272.4;
const BOWL_STEPS = 120;
const LIGHT = (-14 * Math.PI) / 180;

const bowlRings = Array.from({ length: BOWL_STEPS + 1 }, (_, i) => {
  const phi = ((79 * i) / BOWL_STEPS) * (Math.PI / 180);
  const r = 133.2 + 163.8 * Math.cos(phi);
  const at = BOWL_START + 163.8 * Math.sin(phi) * AXIAL;
  const stops = Array.from({ length: 25 }, (_, k) => {
    const c = 1 - k / 12;
    const dot = Math.cos(phi) * c - 0.05 * Math.sin(phi);
    const level = Math.round(Math.min(255, 128 + Math.max(0, dot) * 158));
    return { offset: k / 24, color: `rgb(0,${level},0)` };
  });
  return { id: `bowl${i}`, r, at, stops };
});

const PartView = () => (
  <svg viewBox="281 166 1565 836" className="size-full" role="img" aria-label="EXERCISE-121 shaded model">
    <defs>
      <Shading id="yellow" r={330.4} stops={[[-1, "#a8a860"], [-0.96, "#d0d078"], [-0.8, "#f4f486"], [-0.7, "#ffff88"], [0.3, "#ffff88"], [0.6, "#d8d874"], [0.8, "#b0b05e"], [0.95, "#868648"], [1, "#80804a"]]} />
      <Shading id="green" r={115.8} stops={[[-1, "#009800"], [-0.93, "#00cc00"], [-0.75, "#00ff00"], [0.55, "#00ff00"], [0.8, "#00c000"], [0.95, "#008600"], [1, "#008000"]]} />
      <Shading id="blue" r={115.8} stops={[[-1, "#000090"], [-0.93, "#0000c8"], [-0.75, "#0000ff"], [0.55, "#0000ff"], [0.8, "#0000c8"], [0.95, "#00008c"], [1, "#000080"]]} />
      <Shading id="red" r={49.4} stops={[[-1, "#b00000"], [-0.75, "#ff0000"], [0.5, "#ff0000"], [0.85, "#b80000"], [1, "#900000"]]} />
      <linearGradient id="chamfer" x1="0" y1="0.350" x2="1" y2="0.550">
        <stop offset="0" stopColor="#f00000" />
        <stop offset="0.400" stopColor="#dc0000" />
        <stop offset="0.750" stopColor="#a00000" />
        <stop offset="1" stopColor="#800000" />
      </linearGradient>
      <radialGradient id="shine">
        <stop offset="0" stopColor="#a4ffa4" />
        <stop offset="0.350" stopColor="#7dff7d" stopOpacity="0.750" />
        <stop offset="0.700" stopColor="#40ff40" stopOpacity="0.350" />
        <stop offset="1" stopColor="#00ff00" stopOpacity="0" />
      </radialGradient>
      {bowlRings.map((ring) => (
        <linearGradient
          key={ring.id}
          id={ring.id}
          gradientUnits="userSpaceOnUse"
          gradientTransform={`translate(${ring.at} 0) scale(${RATIO} 1)`}
          x1={-ring.r * Math.cos(LIGHT)}
          y1={ring.r * Math.sin(LIGHT)}
          x2={ring.r * Math.cos(LIGHT)}
          y2={-ring.r * Math.sin(LIGHT)}
        >
          {ring.stops.map((s) => (
            <stop key={s.offset} offset={s.offset} stopColor={s.color} />
          ))}
        </linearGradient>
      ))}
    </defs>
    <g transform="translate(1153.6 665) rotate(18.25)">
      <Barrel from={-303.8} to={-275.6} r={330.4} fill="url(#yellow)" />
      <Disc at={-275.6} r={330.4} fill="#008000" />
      <Barrel from={-275.6} to={-272.4} r={297.2} fill="url(#yellow)" />
      {bowlRings.map((ring) => (
        <Disc key={ring.id} at={ring.at} r={ring.r} fill={`url(#${ring.id})`} />
      ))}
      <Disc at={-138} r={164.8} fill="#008000" />
      <Barrel from={-138} to={0} r={115.8} fill="url(#green)" />
      <Disc at={0} r={115.8} fill="#800000" />
      <Barrel from={0} to={84} r={49.4} fill="url(#red)" />
      <Barrel from={82} to={206} r={115.8} fill="url(#blue)" />
      <Disc at={206} r={115.8} fill="url(#chamfer)" />
      <Disc at={220} r={99.3} fill="#00008b" />
    </g>
    <ellipse cx="793" cy="506" rx="30" ry="62" fill="url(#shine)" transform="rotate(18 793 506)" />
    <g strokeWidth="1.500" fill="none">
      <path d="M1113.500 652.500L1111.800 631" stroke="#7fa32a" />
      <path d="M1113.500 652.500l19.500 6.500" stroke="#e03a3a" />
      <path d="M1113.500 652.500L1099 663.500" stroke="#8fdfe6" />
      <circle cx="1111.800" cy="631" r="2.300" fill="#4fb52f" />
      <circle cx="1133.500" cy="659" r="2.500" fill="#ee3030" />
      <circle cx="1099" cy="663.500" r="3" fill="#42e0ea" />
    </g>
  </svg>
);

const viewTools: { label: string; icon: React.ReactNode; pressed?: boolean; more?: boolean }[] = [
  { label: "Refit", icon: <RefitSmall /> },
  { label: "Zoom in", icon: <Lens sign="+" /> },
  { label: "Zoom out", icon: <Lens sign="-" /> },
  { label: "Repaint", icon: <Repaint /> },
  { label: "Rendering options", icon: <Shade />, more: true },
  { label: "Display style", icon: <Wireless />, more: true },
  { label: "Saved orientations", icon: <SavedSmall />, more: true },
  { label: "View manager", icon: <ManageSmall /> },
  { label: "View normal", icon: <Explode /> },
  { label: "View planar", icon: <Explode up /> },
  { label: "Perspective view", icon: <PerspectiveSmall /> },
  { label: "Section view", icon: <ViewPlane />, pressed: true },
  { label: "Section options", icon: <SectionLine />, more: true },
  { label: "Datum display filters", icon: <DatumFilters />, more: true },
  { label: "Plane display", icon: <PlaneEye /> },
  { label: "Axis display", icon: <AxisEye /> },
  { label: "Point display", icon: <PointsEye /> },
  { label: "Csys display", icon: <CsysEye /> },
  { label: "Annotation display", icon: <AnnotationEye />, pressed: true },
  { label: "Spin center", icon: <SpinCenter />, pressed: true },
  { label: "Simulate", icon: <WarnTriangle /> },
  { label: "Pause simulation", icon: <Pause /> },
  { label: "Resume simulation", icon: <Resume /> },
];

const Viewport = () => (
  <main className="relative min-w-0 flex-1 bg-[#e8e9ed]">
    <PartView />
    <div className="absolute inset-x-0 top-[7px] flex justify-center pl-1">
      <div role="toolbar" aria-label="Graphics" className="flex h-8 w-[609px] items-center justify-between border border-[#b3b7ba] bg-white px-[3px]">
        {viewTools.map((tool) => (
          <button
            key={tool.label}
            aria-label={tool.label}
            aria-pressed={tool.pressed}
            className={`relative flex h-[23px] w-[23px] items-center justify-center ${tool.pressed ? "border border-[#b4b4b4] bg-[#e0e0e0]" : ""}`}
          >
            {tool.icon}
            {tool.more && (
              <svg width="4" height="4" viewBox="0 0 4 4" className="absolute right-0 bottom-0" aria-hidden="true">
                <path d="M4 0v4H0z" fill="#444" />
              </svg>
            )}
          </button>
        ))}
      </div>
    </div>
  </main>
);

const StatusBar = () => (
  <footer className="flex h-[34px] shrink-0 items-center border-t border-[#b5b9bd] bg-white pr-0.5 pl-1.5 text-[11px]">
    <button aria-label="Toggle navigator" aria-pressed="true" className="flex size-[22px] items-center justify-center border border-[#ababab] bg-[#e0e0e0]"><TreeIcon /></button>
    <button aria-label="Toggle browser" className="ml-[7px]">
      <Svg>
        <circle cx="8" cy="8" r="6" fill="#3da0d4" />
        <path d="M4 5q3-3 5 0t-3 4q-3-1-2-4zM10 8l3-1-1 4-3 1z" fill="#c6e9f7" />
        <ellipse cx="8" cy="8" rx="9" ry="3.500" transform="rotate(-48 8 8)" stroke="#5b7a90" />
      </Svg>
    </button>
    <button aria-label="Full screen" className="ml-2.5 size-4 border border-[#2f6483] bg-linear-to-b from-white to-[#c2d9e8]" />
    <span className="ml-3 h-[22px] w-px bg-[#c4c4c4]" />
    <span className="ml-1.5 size-[5px] rounded-full bg-[#1f6587]" />
    <p className="ml-[5px]">EXERCISE-121 has been saved.</p>
    <div className="ml-auto flex items-center">
      <span className="h-[26px] w-1.5 border-x border-[#c4c4c4]" />
      <button aria-label="Find" className="ml-0.5 flex h-6 w-7 items-center justify-center border border-[#b8b8b8]">
        <Svg>
          <path d="M3 1h3.500v2h3V1H13v3l3 8v3h-6V8H6.500v7H0v-3l3-8z" fill="#555" />
          <path d="M2 13L5 5M14 13L11 5" stroke="#bbb" strokeWidth="1.500" />
          <path d="M0 14h6.500M10 14h6M3 2h3.500M9.500 2H13" stroke="#222" strokeWidth="1.500" />
        </Svg>
      </button>
      <button aria-label="Find options" className="flex h-6 w-3.5 items-center justify-center border border-l-0 border-[#b8b8b8]"><Caret /></button>
      <span className="ml-0.5 h-[26px] w-px bg-[#c4c4c4]" />
      <div className="relative ml-[90px] flex h-[23px] w-[165px] border border-[#a8a8a8] bg-[#f6f6f6]">
        <select aria-label="Selection filter" className="w-full appearance-none bg-transparent pl-2 text-xs outline-none">
          <option>Geometry</option>
        </select>
        <span className="pointer-events-none absolute inset-y-0 right-0 flex w-[15px] items-center justify-center border-l border-[#a8a8a8]">
          <Caret />
        </span>
      </div>
      <svg width="12" height="12" viewBox="0 0 12 12" className="ml-1 self-end" aria-hidden="true">
        <path d="M0 12L12 0M4 12l8-8M8 12l4-4" stroke="#aaa" strokeWidth="1.300" />
      </svg>
    </div>
  </footer>
);

const App: React.FC = () => {
  return (
    <div className="flex h-screen flex-col border-b border-[#4a4a4a] font-['Open_Sans','Noto_Sans',sans-serif] text-[#444]">
      <div className="flex min-h-0 flex-1 flex-col border-x-4 border-t-4 border-b-3 border-[#b9b9ba]">
        <TitleBar />
        <TabBar />
        <Ribbon />
        <div className="flex min-h-0 flex-1">
          <ModelTree />
          <Viewport />
        </div>
        <StatusBar />
      </div>
    </div>
  );
};

export default App;
